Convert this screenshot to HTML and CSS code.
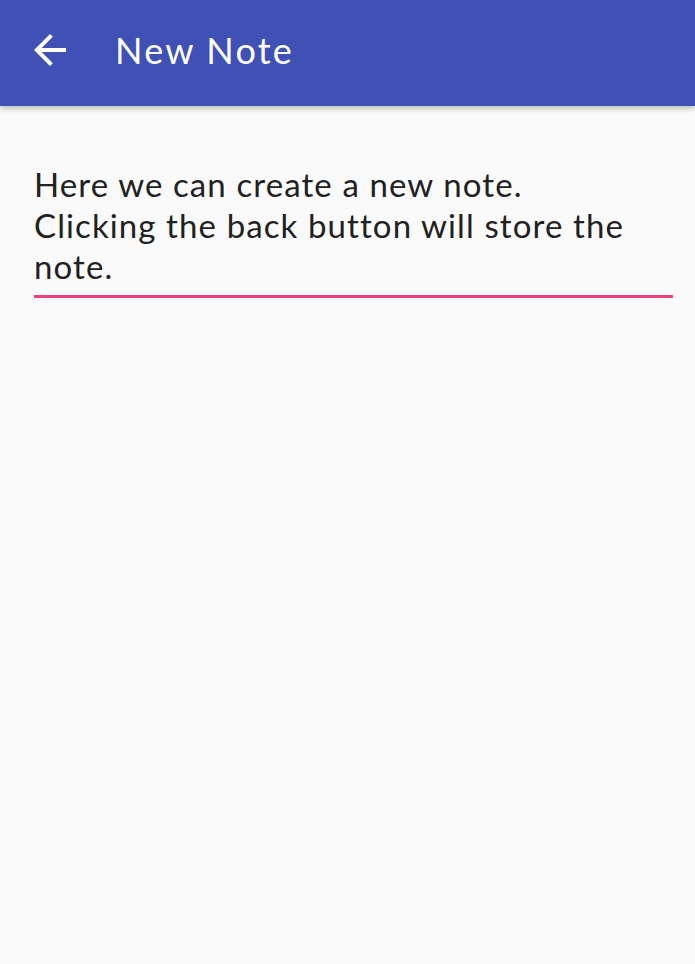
FILE: index.html
```html
<!DOCTYPE html>
<html>
<head>
<meta charset="utf-8">
<link rel="stylesheet" href="styles.css">
</head>
<body>
<header class="appbar">
  <svg class="back" viewBox="0 0 24 24" width="48" height="48"><path fill="#fff" d="M20 11H7.83l5.59-5.59L12 4l-8 8 8 8 1.41-1.41L7.83 13H20v-2z"/></svg>
  <h1 class="title">New Note</h1>
</header>
<main class="content">
  <div class="field">
    <p class="text">Here we can create a new note.<br>Clicking the back button will store the note.</p>
  </div>
</main>
</body>
</html>
```
FILE: styles.css
```css
html, body {
  margin: 0;
  padding: 0;
  background: #fafafa;
  font-family: Lato, "Open Sans", sans-serif;
}
.appbar {
  height: 106px;
  background: #3f51b5;
  display: flex;
  align-items: center;
  box-shadow: 0 2px 6px rgba(0,0,0,0.28);
  position: relative;
}
.back {
  margin-left: 26px;
  margin-top: -6px;
  flex: none;
}
.title {
  margin: -6px 0 0 41px;
  color: #fff;
  font-weight: 400;
  font-size: 36px;
  letter-spacing: 2.2px;
}
.content {
  padding: 58px 22px 0 34px;
}
.field {
  border-bottom: 3px solid #ec407a;
  padding-bottom: 8px;
}
.text {
  margin: 0;
  font-size: 33px;
  line-height: 41px;
  letter-spacing: 1.1px;
  color: #212121;
}
```
